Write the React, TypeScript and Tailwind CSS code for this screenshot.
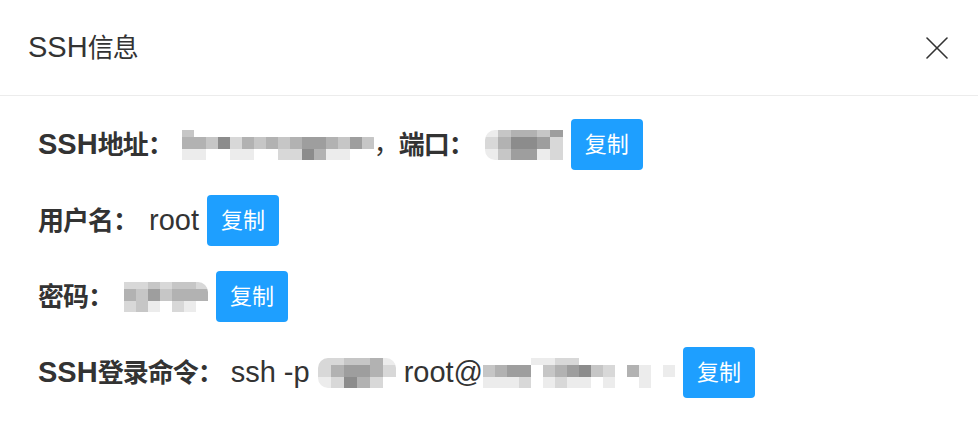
// mosaic shades, one char per cell
const SHADE: Record<string, string> = {
  '0': 'bg-transparent',
  '1': 'bg-[#ececec]',
  '2': 'bg-[#d8d8d8]',
  '3': 'bg-[#c6c6c6]',
  '4': 'bg-[#b2b2b2]',
  '5': 'bg-[#9e9e9e]',
  '6': 'bg-[#8c8c8c]',
};

const ROW_H = ['h-[7px]', 'h-[12px]', 'h-[11px]'];

type MosaicProps = {
  rows: string[];
  cell?: string;
  className?: string;
};

function Mosaic({ rows, cell = 'w-[12px]', className = '' }: MosaicProps) {
  return (
    <span className={`inline-flex flex-col overflow-hidden shrink-0 ${className}`}>
      {rows.map((row, i) => (
        <span key={i} className={`flex ${ROW_H[i]}`}>
          {row.split('').map((c, j) => (
            <span key={j} className={`${cell} h-full ${SHADE[c]}`} />
          ))}
        </span>
      ))}
    </span>
  );
}

// CJK runs are a touch narrower than the latin text around them
function Cn({ children }: { children: React.ReactNode }) {
  return <span className="text-[26px] tracking-[-1px]">{children}</span>;
}

function CopyBtn() {
  return (
    <button className="ml-[8px] h-[51px] px-[14px] rounded-[4px] bg-[#1E9FFF] text-white text-[22px] leading-none shrink-0">
      复制
    </button>
  );
}

export default function App() {
  return (
    <div
      className="w-[978px] h-[438px] bg-white text-[#333]"
      style={{ fontFamily: '"Liberation Sans", "Noto Sans CJK SC", sans-serif' }}
    >
      <div className="h-[96px] flex items-center justify-between pl-[28px] pr-[30px] border-b border-[#ececec]">
        <span className="text-[29px]">
          SSH<Cn>信息</Cn>
        </span>
        <svg width="22" height="22" viewBox="0 0 22 22" stroke="#333" strokeWidth="1.6" strokeLinecap="round">
          <line x1="1" y1="1" x2="21" y2="21" />
          <line x1="21" y1="1" x2="1" y2="21" />
        </svg>
      </div>

      <div className="pl-[38px] pt-[23px] flex flex-col gap-[25px] text-[29px] whitespace-nowrap">
        <div className="flex items-center h-[51px]">
          <b>
            SSH<Cn>地址：</Cn>
          </b>
          <Mosaic
            className="ml-[9px] rounded-r-[8px]"
            rows={['3000000000000000', '4436243434554353', '1100110022641100']}
          />
          <Cn>，</Cn>
          <b>
            <Cn>端口：</Cn>
          </b>
          <Mosaic
            className="ml-[11px] rounded-l-[10px]"
            cell="w-[13px]"
            rows={['134435', '246652', '135512']}
          />
          <CopyBtn />
        </div>

        <div className="flex items-center h-[51px]">
          <b>
            <Cn>用户名：</Cn>
          </b>
          <span className="ml-[11px]">root</span>
          <CopyBtn />
        </div>

        <div className="flex items-center h-[51px]">
          <b>
            <Cn>密码：</Cn>
          </b>
          <Mosaic
            className="ml-[11px] rounded-r-[10px]"
            rows={['2232332', '4353444', '2310210']}
          />
          <CopyBtn />
        </div>

        <div className="flex items-center h-[51px]">
          <b>
            SSH<Cn>登录命令：</Cn>
          </b>
          <span className="ml-[8px]">ssh -p</span>
          <Mosaic
            className="ml-[8px] rounded-[10px]"
            cell="w-[13px]"
            rows={['223341', '245542', '126420']}
          />
          <span className="ml-[8px]">root@</span>
          <Mosaic rows={['0000112200000000', '3455034563204101', '1112012110100100']} />
          <CopyBtn />
        </div>
      </div>
    </div>
  );
}
